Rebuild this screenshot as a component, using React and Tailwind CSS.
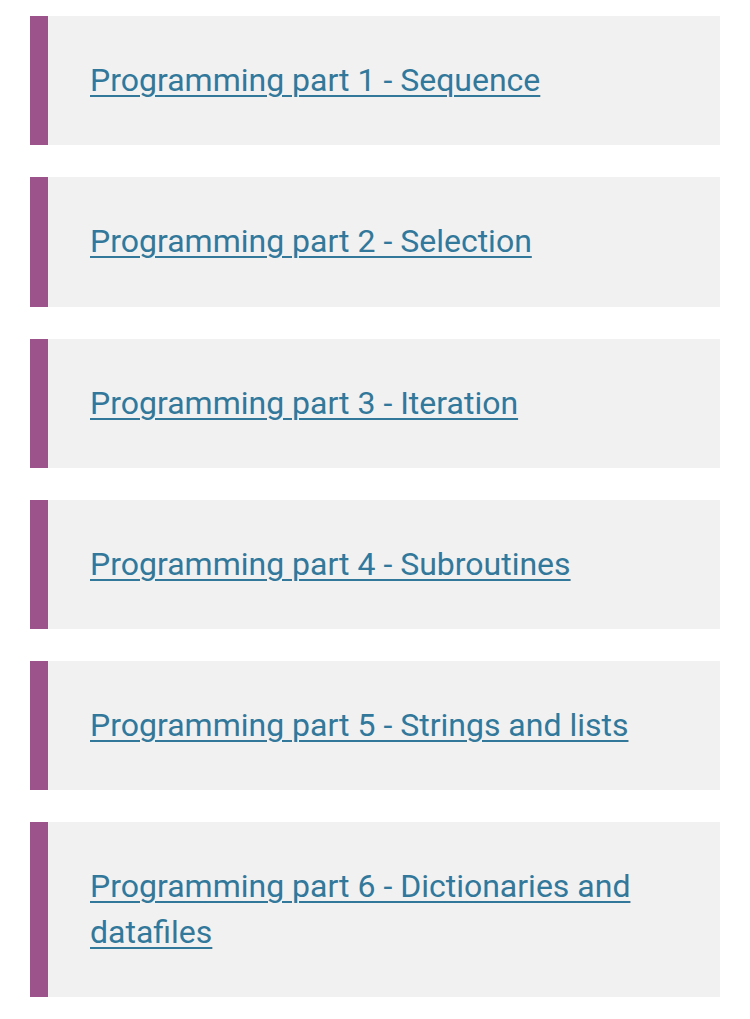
const LESSONS = [
  "Programming part 1 - Sequence",
  "Programming part 2 - Selection",
  "Programming part 3 - Iteration",
  "Programming part 4 - Subroutines",
  "Programming part 5 - Strings and lists",
  "Programming part 6 - Dictionaries and datafiles",
];

export default function App() {
  return (
    <div className="min-h-screen bg-white pt-4 px-[30px] font-['Roboto',sans-serif]">
      <ul className="flex flex-col gap-8 w-[690px]">
        {LESSONS.map((title) => (
          <li
            key={title}
            className="bg-[#f1f1f1] border-l-[18px] border-[#9c528b] pl-[42px] pr-10 py-[42px]"
          >
            <a
              href="#"
              className="text-[32px] leading-[45.3px] text-[#31789a] underline underline-offset-[4px] decoration-2"
            >
              {title}
            </a>
          </li>
        ))}
      </ul>
    </div>
  );
}
